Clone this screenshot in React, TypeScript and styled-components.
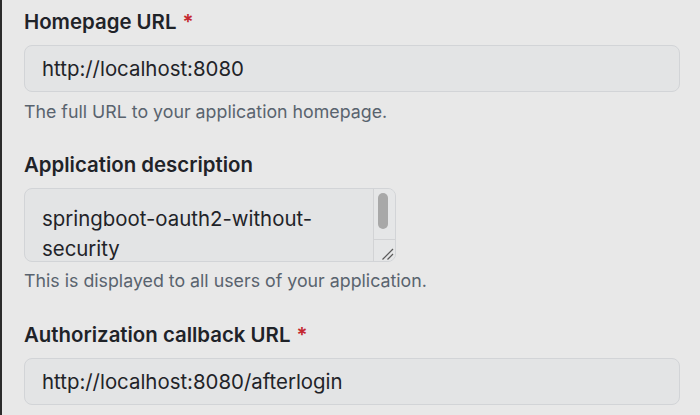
import React from "react";
import styled, { createGlobalStyle } from "styled-components";

const Global = createGlobalStyle`
  html, body { margin: 0; padding: 0; background: #e8e8e8; }
  body { font-family: Inter, "Noto Sans", sans-serif; -webkit-font-smoothing: antialiased; }
`;

const Page = styled.div`
  width: 700px;
  height: 415px;
  box-sizing: border-box;
  border-left: 2px solid #2b2b2b;
  padding: 7px 20px 0 22px;
  overflow: hidden;
  display: flex;
  flex-direction: column;
`;

const Label = styled.label<{ $gap?: number }>`
  display: block;
  font-size: 20.4px;
  line-height: 30px;
  font-weight: 600;
  color: #1f2328;
  margin-top: ${(p) => p.$gap ?? 0}px;
  margin-bottom: 8px;
`;

const Req = styled.span`
  color: #c4262e;
  margin-left: 6px;
`;

const Input = styled.input`
  box-sizing: border-box;
  width: 100%;
  height: 47px;
  padding: 0 17px;
  font: inherit;
  font-size: 20.4px;
  line-height: 30px;
  color: #1f2328;
  background: #e3e4e5;
  border: 1px solid #d2d4d7;
  border-radius: 8px;
  outline: none;
`;

const AreaBox = styled.div`
  box-sizing: border-box;
  width: 372px;
  height: 74px;
  display: flex;
  background: #e3e4e5;
  border: 1px solid #d2d4d7;
  border-radius: 8px;
  overflow: hidden;
`;

const AreaText = styled.div`
  flex: 1;
  padding: 15px 17px 0 17px;
  font-size: 20.4px;
  line-height: 30px;
  color: #1f2328;
  overflow: hidden;
  white-space: pre-line;
`;

const ScrollCol = styled.div`
  width: 21px;
  display: flex;
  flex-direction: column;
  border-left: 1px solid #d2d3d5;
  background: #e5e6e7;
`;

const Track = styled.div`
  flex: 1;
  padding: 4px 5px 0 4px;
`;

const Thumb = styled.div`
  width: 10px;
  height: 36px;
  border-radius: 5px;
  background: #a8a8a8;
`;

const Resizer = styled.div`
  height: 21px;
  border-top: 1px solid #d2d3d5;
  display: flex;
  align-items: flex-end;
  justify-content: flex-end;
`;

const Hint = styled.p<{ $gap?: number }>`
  margin: ${(p) => p.$gap ?? 8}px 0 0 0;
  font-size: 17.8px;
  line-height: 24px;
  color: #59636e;
`;

export default function App() {
  return (
    <>
      <Global />
      <Page>
        <Label>
          Homepage URL<Req>*</Req>
        </Label>
        <Input readOnly value="http://localhost:8080" />
        <Hint>The full URL to your application homepage.</Hint>

        <Label $gap={26}>Application description</Label>
        <AreaBox>
          <AreaText>{"springboot-oauth2-without-\nsecurity"}</AreaText>
          <ScrollCol>
            <Track>
              <Thumb />
            </Track>
            <Resizer>
              <svg width="20" height="20" viewBox="0 0 20 20">
                <line x1="7.5" y1="18.5" x2="18" y2="8" stroke="#5a5a5a" strokeWidth="1.2" />
                <line x1="12.5" y1="18.5" x2="18" y2="13" stroke="#5a5a5a" strokeWidth="1.2" />
              </svg>
            </Resizer>
          </ScrollCol>
        </AreaBox>
        <Hint $gap={7}>This is displayed to all users of your application.</Hint>

        <Label $gap={27}>
          Authorization callback URL<Req>*</Req>
        </Label>
        <Input readOnly value="http://localhost:8080/afterlogin" />
      </Page>
    </>
  );
}
